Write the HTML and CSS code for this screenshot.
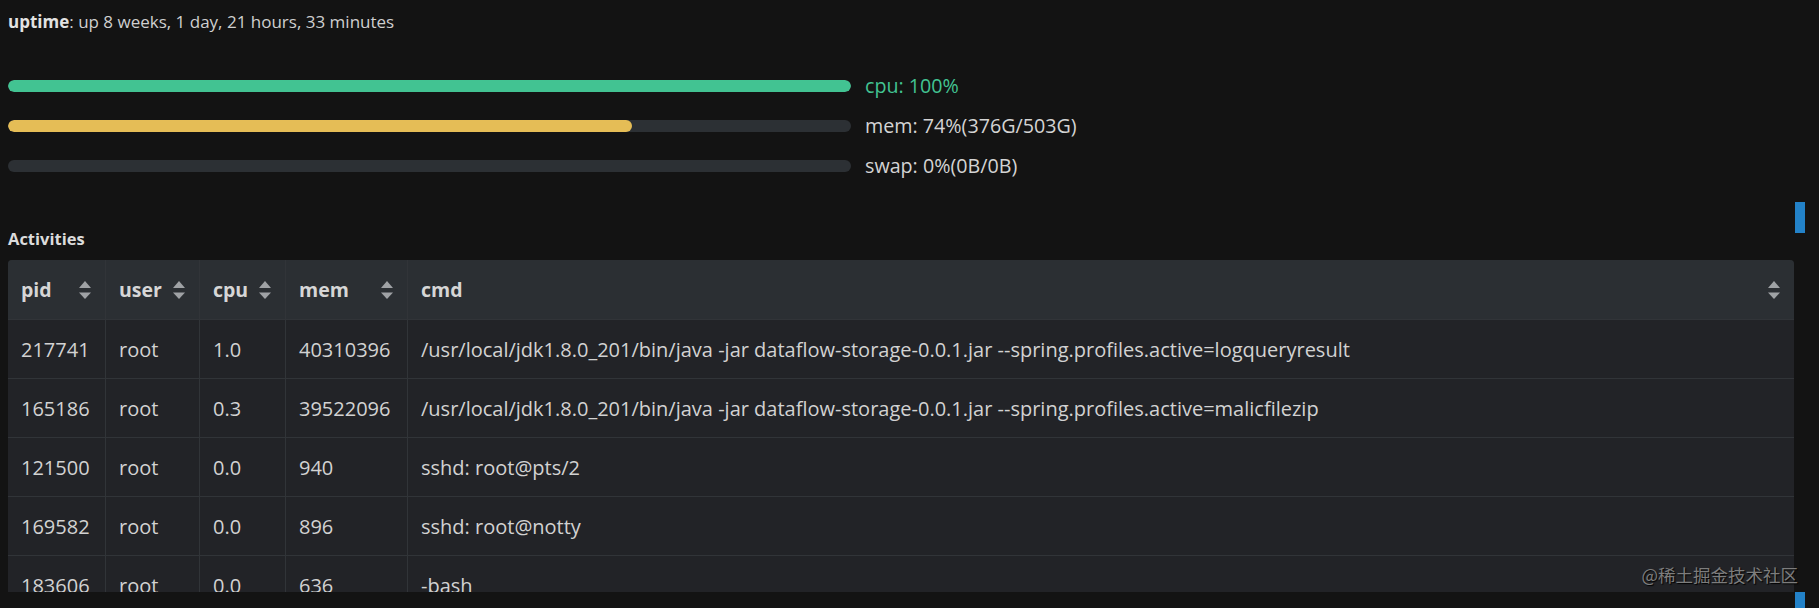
FILE: index.html
```html
<!DOCTYPE html>
<html lang="en">
<head>
<meta charset="utf-8">
<title>Server status</title>
<link rel="stylesheet" href="styles.css">
</head>
<body>
<div class="page">
  <div class="uptime"><b>uptime</b>: up 8 weeks, 1 day, 21 hours, 33 minutes</div>

  <div class="stats">
    <div class="stat">
      <div class="track"><div class="fill fill-cpu" style="width:100%"></div></div>
      <span class="label label-cpu">cpu: 100%</span>
    </div>
    <div class="stat">
      <div class="track"><div class="fill fill-mem" style="width:74%"></div></div>
      <span class="label">mem: 74%(376G/503G)</span>
    </div>
    <div class="stat">
      <div class="track"><div class="fill fill-swap" style="width:0%"></div></div>
      <span class="label">swap: 0%(0B/0B)</span>
    </div>
  </div>

  <div class="section-title">Activities</div>

  <div class="table-wrap">
    <div class="grid">
      <div class="th"><span>pid</span><svg class="sort" viewBox="0 0 12 18"><polygon points="6,0 12,7 0,7"/><polygon points="0,11.5 12,11.5 6,18"/></svg></div>
      <div class="th"><span>user</span><svg class="sort" viewBox="0 0 12 18"><polygon points="6,0 12,7 0,7"/><polygon points="0,11.5 12,11.5 6,18"/></svg></div>
      <div class="th"><span>cpu</span><svg class="sort" viewBox="0 0 12 18"><polygon points="6,0 12,7 0,7"/><polygon points="0,11.5 12,11.5 6,18"/></svg></div>
      <div class="th"><span>mem</span><svg class="sort" viewBox="0 0 12 18"><polygon points="6,0 12,7 0,7"/><polygon points="0,11.5 12,11.5 6,18"/></svg></div>
      <div class="th th-last"><span>cmd</span><svg class="sort" viewBox="0 0 12 18"><polygon points="6,0 12,7 0,7"/><polygon points="0,11.5 12,11.5 6,18"/></svg></div>

      <div class="td">217741</div><div class="td">root</div><div class="td">1.0</div><div class="td">40310396</div><div class="td td-last">/usr/local/jdk1.8.0_201/bin/java -jar dataflow-storage-0.0.1.jar --spring.profiles.active=logqueryresult</div>
      <div class="td">165186</div><div class="td">root</div><div class="td">0.3</div><div class="td">39522096</div><div class="td td-last">/usr/local/jdk1.8.0_201/bin/java -jar dataflow-storage-0.0.1.jar --spring.profiles.active=malicfilezip</div>
      <div class="td">121500</div><div class="td">root</div><div class="td">0.0</div><div class="td">940</div><div class="td td-last">sshd: root@pts/2</div>
      <div class="td">169582</div><div class="td">root</div><div class="td">0.0</div><div class="td">896</div><div class="td td-last">sshd: root@notty</div>
      <div class="td">183606</div><div class="td">root</div><div class="td">0.0</div><div class="td">636</div><div class="td td-last">-bash</div>
    </div>
  </div>
</div>

<div class="thumb thumb-top"></div>
<div class="thumb thumb-bottom"></div>
<div class="watermark">@稀土掘金技术社区</div>
</body>
</html>
```

FILE: styles.css
```css
html, body {
  margin: 0;
  padding: 0;
  background: #131313;
}

body {
  position: relative;
  width: 1819px;
  height: 608px;
  overflow: hidden;
  font-family: "Open Sans", "Noto Sans", sans-serif;
  color: #d2d2d2;
}

.page {
  padding: 0 8px;
}

.uptime {
  margin-top: 10px;
  font-size: 17px;
  line-height: 23px;
  color: #cfcfcf;
}

.uptime b {
  color: #e2e2e2;
  font-weight: 700;
}

.stats {
  margin-top: 33px;
  display: flex;
  flex-direction: column;
}

.stat {
  height: 40px;
  display: flex;
  align-items: center;
  gap: 14px;
}

.track {
  width: 843px;
  height: 12px;
  border-radius: 6px;
  background: #2c3034;
  overflow: hidden;
}

.fill {
  height: 100%;
  border-radius: 6px;
}

.fill-cpu { background: #42c392; }
.fill-mem { background: #e5bd56; }
.fill-swap { background: #2c3034; }

.label {
  font-size: 19.7px;
  line-height: 40px;
  color: #d4d4d4;
  white-space: nowrap;
}

.label-cpu {
  color: #42c392;
}

.section-title {
  margin-top: 42px;
  font-size: 16.5px;
  line-height: 22px;
  font-weight: 700;
  color: #dcdcdc;
}

.table-wrap {
  margin-top: 10px;
  width: 1786px;
  height: 332px;
  overflow: hidden;
  border-radius: 4px 4px 0 0;
  background: #222327;
}

.grid {
  display: grid;
  grid-template-columns: 98px 94px 86px 122px 1fr;
  font-size: 20px;
}

.th, .td {
  box-sizing: border-box;
  border-right: 1px solid #313438;
  border-bottom: 1px solid #313438;
  padding: 0 14px 0 13px;
  display: flex;
  align-items: center;
  white-space: nowrap;
}

.th {
  height: 60px;
  background: #2b2f33;
  justify-content: space-between;
  font-weight: 700;
  font-size: 19.5px;
  color: #d6d6d6;
}

.td {
  height: 59px;
  background: #222327;
  color: #d2d2d2;
}

.th-last, .td-last {
  border-right: none;
}

.sort {
  width: 12px;
  height: 18px;
  flex: none;
  fill: #9fa2a5;
}

.thumb {
  position: absolute;
  left: 1795px;
  width: 10px;
  background: #2382c8;
}

.thumb-top {
  top: 202px;
  height: 31px;
}

.thumb-bottom {
  top: 592px;
  height: 16px;
}

.watermark {
  position: absolute;
  right: 21px;
  top: 563px;
  font-family: "Noto Sans CJK SC", sans-serif;
  font-size: 17.5px;
  line-height: 24px;
  color: #7d7d7d;
  text-shadow: 1px 1px 1px #000;
  white-space: nowrap;
}
```
